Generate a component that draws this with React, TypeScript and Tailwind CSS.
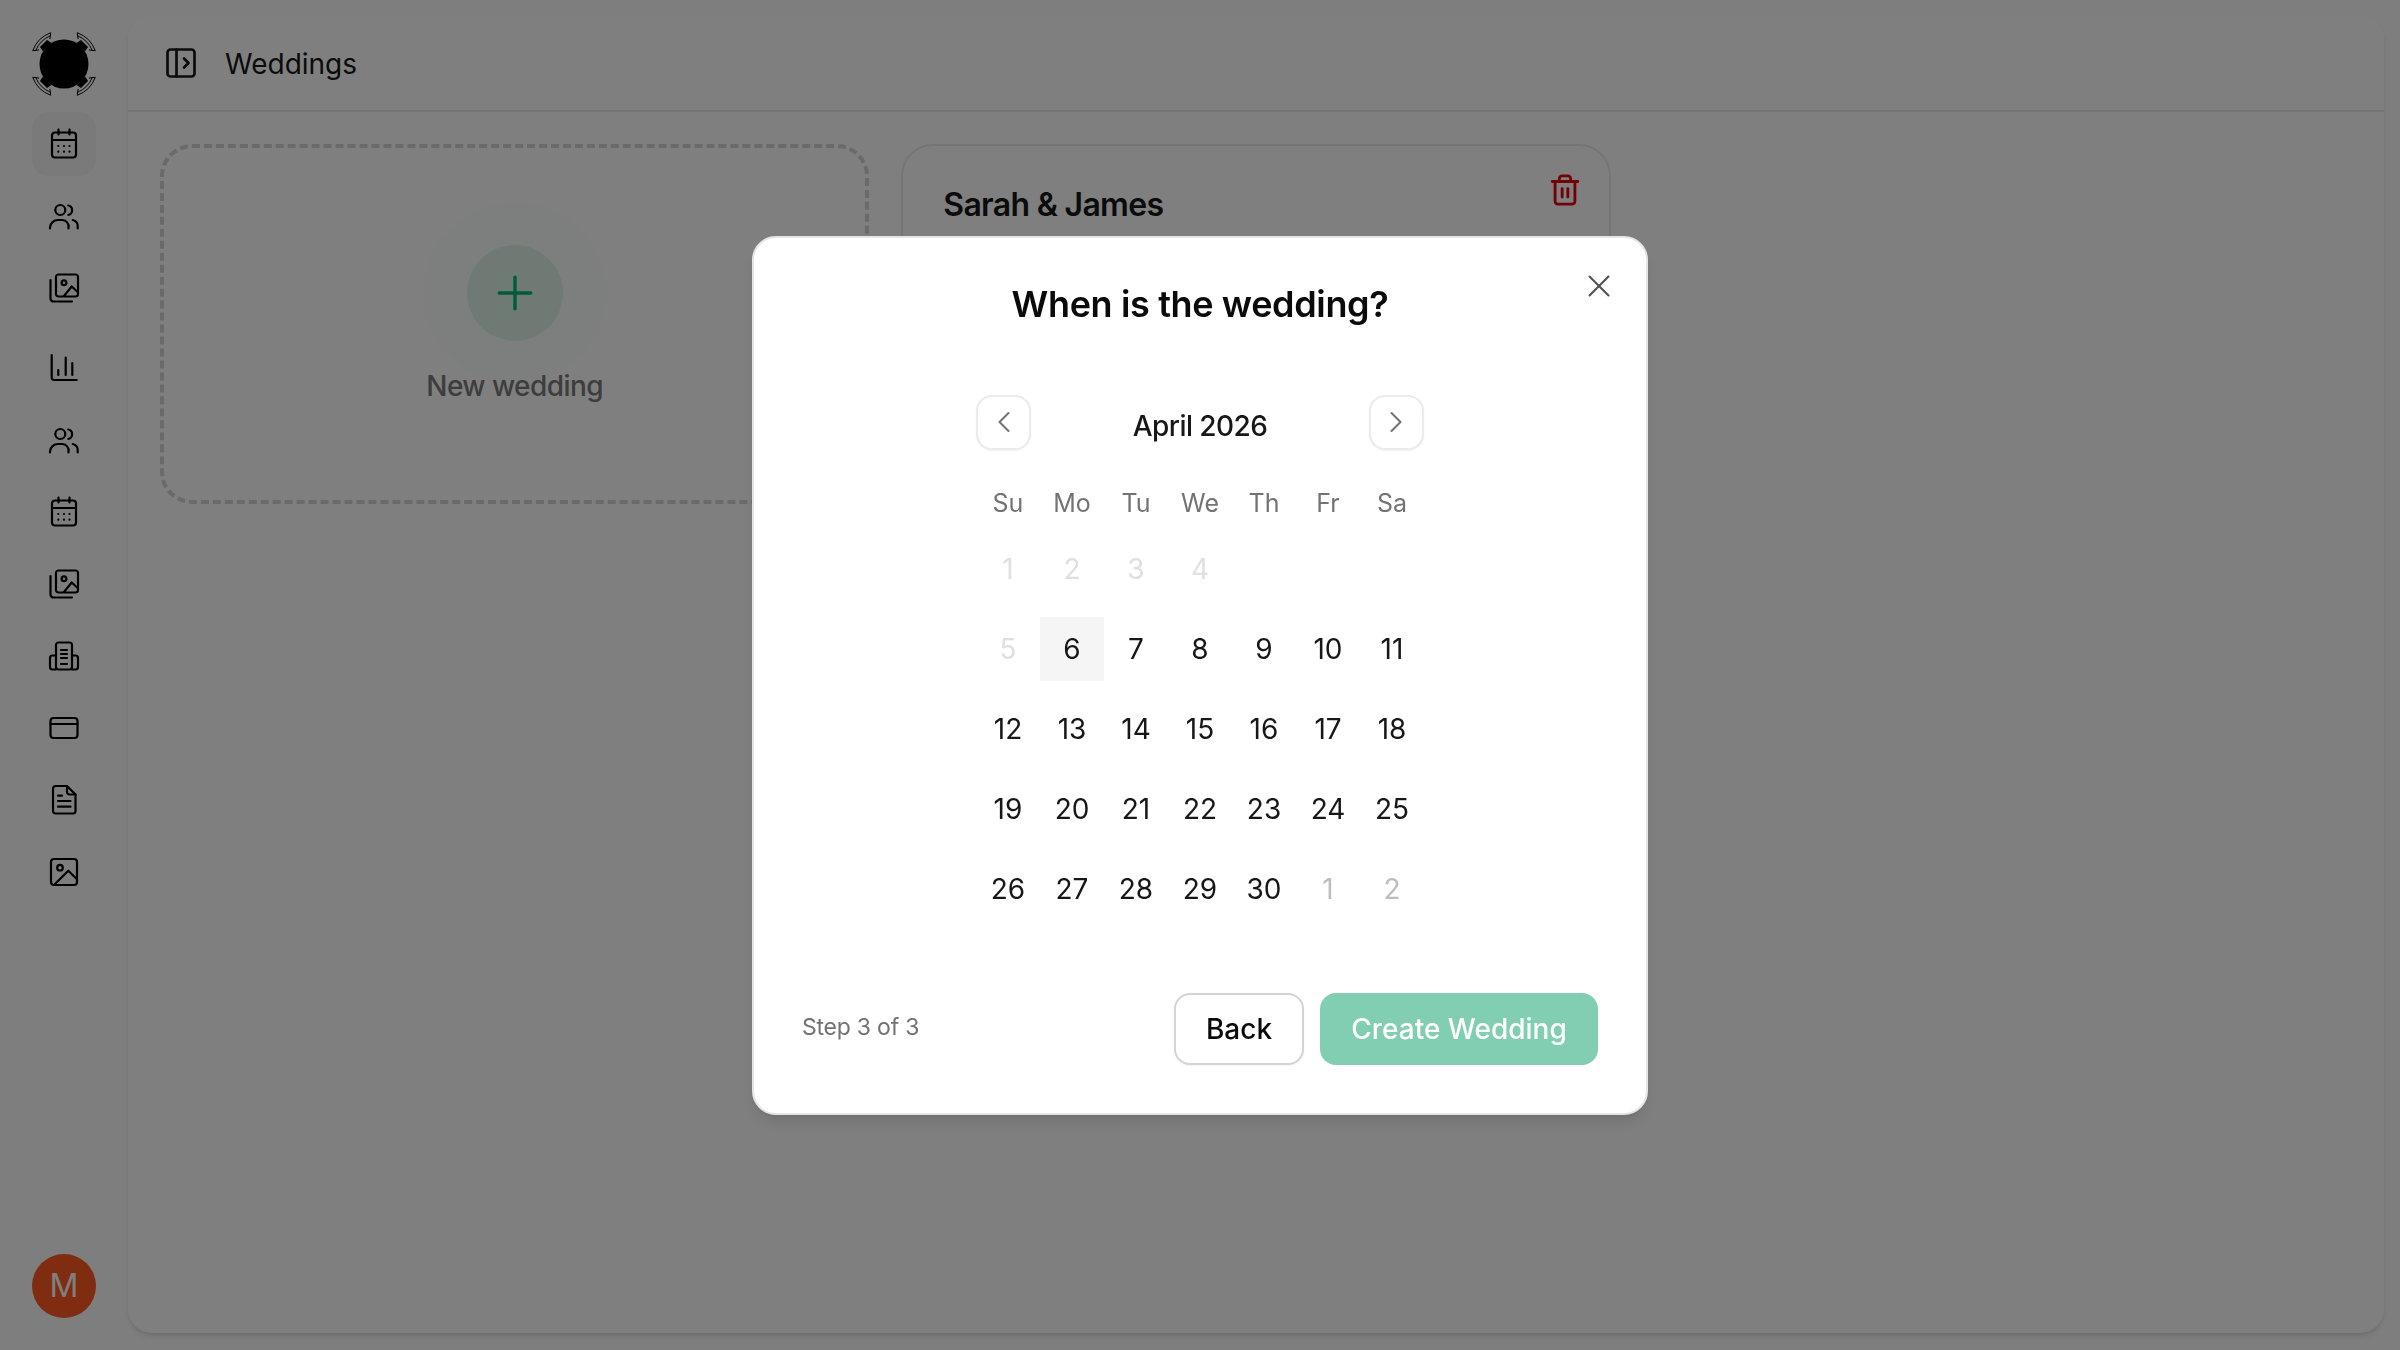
import { ChevronLeft, ChevronRight, PanelLeftOpen, Plus, Trash2, X } from "lucide-react";
import type { ReactNode } from "react";

const FONT = "font-['Inter','Liberation_Sans',sans-serif]";

function Icon({ children }: { children: ReactNode }) {
  return (
    <svg
      width="32"
      height="32"
      viewBox="0 0 32 32"
      fill="none"
      stroke="currentColor"
      strokeWidth="2.2"
      strokeLinecap="round"
      strokeLinejoin="round"
    >
      {children}
    </svg>
  );
}

const CalendarIcon = () => (
  <Icon>
    <rect x="4" y="4.5" width="24" height="25" rx="3" />
    <path d="M4 12h24M10.5 1.5v5M21.5 1.5v5" />
    <path d="M10.3 18h.01M16 18h.01M21.5 18h.01M10.3 23.7h.01M16 23.7h.01M21.5 23.7h.01" />
  </Icon>
);

const UsersIcon = () => (
  <Icon>
    <circle cx="12.3" cy="10" r="5" />
    <path d="M20.3 5.5a4.8 4.8 0 0 1 0 9.4" />
    <path d="M2 28.5v-1a8 8 0 0 1 8-7.5h4.5a6.5 6.5 0 0 1 6 7.5v1" />
    <path d="M24.7 20a6 6 0 0 1 5 7v1.5" />
  </Icon>
);

const ImagesIcon = () => (
  <Icon>
    <rect x="8" y="2.5" width="22" height="22" rx="2.5" />
    <circle cx="16" cy="10.7" r="2.4" />
    <path d="M16 24l7.7-9.5 6 5.5" />
    <path d="M2.5 8v18.5a3 3 0 0 0 3 3h18.5" />
  </Icon>
);

const ChartIcon = () => (
  <Icon>
    <path d="M3.7 3v22.5a2.5 2.5 0 0 0 2.5 2.5h22.5" />
    <path d="M10.3 18v5M17.7 5.7V23M24.3 11v12" />
  </Icon>
);

const BuildingIcon = () => (
  <Icon>
    <rect x="8" y="2.5" width="16" height="27" rx="2.5" />
    <path d="M8 15.5H4.5A2.5 2.5 0 0 0 2 18v9a2.5 2.5 0 0 0 2.5 2.5H8" />
    <path d="M24 15.5h3.5A2.5 2.5 0 0 1 30 18v9a2.5 2.5 0 0 1-2.5 2.5H24" />
    <path d="M13 10h6M13 14h6M13 18h6M13 24h6" />
  </Icon>
);

const CardIcon = () => (
  <Icon>
    <rect x="2.5" y="6" width="27" height="20" rx="3" />
    <path d="M2.5 12h27" />
  </Icon>
);

const FileIcon = () => (
  <Icon>
    <path d="M7.5 2h11.5l8.5 8.5V27a2.5 2.5 0 0 1-2.5 2.5H7.5A2.5 2.5 0 0 1 5 27V4.5A2.5 2.5 0 0 1 7.5 2z" />
    <path d="M19 2v6a2.5 2.5 0 0 0 2.5 2.5h6" />
    <path d="M10 11.7h4M10 17h12.5M10 22.7h12.5" />
  </Icon>
);

const ImageIcon = () => (
  <Icon>
    <rect x="3" y="3" width="26" height="26" rx="3" />
    <circle cx="12" cy="11.7" r="2.8" />
    <path d="M7 28l13.3-13.3L29 23.3" />
  </Icon>
);

function Logo() {
  return (
    <svg width="64" height="64" viewBox="0 0 64 64" className="overflow-visible">
      <circle cx="32" cy="32" r="24.5" fill="#000" />
      {[45, 135, 225, 315].map((deg) => (
        <g key={deg} transform={`rotate(${deg} 32 32)`}>
          <path d="M26 8h12l-1-5H27z" fill="#000" />
          <path d="M19.3 0.5Q32-5.5 44.7 0.5" fill="none" stroke="#000" strokeWidth="0.9" />
          <path d="M21.5 2.5Q32-2 42.5 2.5" fill="none" stroke="#000" strokeWidth="0.9" />
          <path d="M19.3 0.5l5 4M44.7 0.5l-5 4" fill="none" stroke="#000" strokeWidth="0.9" />
        </g>
      ))}
    </svg>
  );
}

const NAV_TOP = [CalendarIcon, UsersIcon, ImagesIcon];
const NAV_BOTTOM = [ChartIcon, UsersIcon, CalendarIcon, ImagesIcon, BuildingIcon, CardIcon, FileIcon, ImageIcon];

function Sidebar() {
  return (
    <aside className="flex w-[128px] shrink-0 flex-col items-center pt-8 pb-8">
      <Logo />
      <nav className="mt-4 flex flex-col gap-2">
        {NAV_TOP.map((NavIcon, i) => (
          <div
            key={i}
            className={`flex h-16 w-16 items-center justify-center rounded-2xl text-black ${i === 0 ? "bg-[#f5f5f5]" : ""}`}
          >
            <NavIcon />
          </div>
        ))}
      </nav>
      <nav className="mt-4 flex flex-col gap-2">
        {NAV_BOTTOM.map((NavIcon, i) => (
          <div key={i} className="flex h-16 w-16 items-center justify-center text-black">
            <NavIcon />
          </div>
        ))}
      </nav>
      <div className="mt-auto flex h-16 w-16 items-center justify-center rounded-full bg-[#fe5820] text-[32px] text-white">
        M
      </div>
    </aside>
  );
}

function WeddingCards() {
  return (
    <div className="grid grid-cols-3 gap-8 p-8">
      <div className="relative flex h-[360px] flex-col items-center rounded-[32px] border-[4px] border-dashed border-[#d4d4d4] pt-[54px]">
        <div className="flex h-[182px] w-[182px] items-center justify-center rounded-full bg-[#fbfffc]">
          <div className="flex h-24 w-24 items-center justify-center rounded-full bg-[#dff5ea] text-[#00b478]">
            <Plus size={54} strokeWidth={1.5} />
          </div>
        </div>
        <p className="-mt-[16px] text-[28px] leading-9 font-medium tracking-[-0.02em] text-[#7a7a7a]">New wedding</p>
      </div>
      <div className="flex h-[360px] items-start justify-between rounded-[32px] border-2 border-[#ebebeb] pt-[39px] pr-[27px] pl-[40px]">
        <h3 className="text-[32px] leading-10 font-semibold tracking-[-0.022em] text-[#171717]">Sarah &amp; James</h3>
        <Trash2 size={34} strokeWidth={2} className="-mt-[12px] text-[#e7000b]" />
      </div>
      <div />
    </div>
  );
}

const WEEKDAYS = ["Su", "Mo", "Tu", "We", "Th", "Fr", "Sa"];
const FADED = "text-[#e0e0e0]";
const OUTSIDE = "text-[#bdbdbd]";
const DAYS: { label: string; tone?: string; selected?: boolean }[] = [
  { label: "1", tone: FADED },
  { label: "2", tone: FADED },
  { label: "3", tone: FADED },
  { label: "4", tone: FADED },
  { label: "" },
  { label: "" },
  { label: "" },
  { label: "5", tone: FADED },
  { label: "6", selected: true },
  ...Array.from({ length: 24 }, (_, i) => ({ label: String(i + 7) })),
  { label: "1", tone: OUTSIDE },
  { label: "2", tone: OUTSIDE },
];

function Calendar() {
  return (
    <div className="mx-auto w-[448px]">
      <div className="flex items-center justify-between">
        <button className="flex h-[55px] w-[55px] items-center justify-center rounded-2xl border-2 border-[#ebebeb] bg-white text-[#737373] shadow-xs">
          <ChevronLeft size={36} strokeWidth={1.4} />
        </button>
        <span className="pt-[7px] text-[28px] leading-9 font-medium tracking-[-0.02em] text-[#171717]">April 2026</span>
        <button className="flex h-[55px] w-[55px] items-center justify-center rounded-2xl border-2 border-[#ebebeb] bg-white text-[#737373] shadow-xs">
          <ChevronRight size={36} strokeWidth={1.4} />
        </button>
      </div>
      <div className="mt-[37px] grid grid-cols-7 text-center text-[25px] leading-8 text-[#737373]">
        {WEEKDAYS.map((d) => (
          <span key={d}>{d}</span>
        ))}
      </div>
      <div className="mt-[18px] grid grid-cols-7 gap-y-4">
        {DAYS.map((day, i) => (
          <div
            key={i}
            className={`flex h-16 items-center justify-center text-[28px] ${day.tone ?? "text-[#171717]"} ${day.selected ? "bg-[#f5f5f5]" : ""}`}
          >
            {day.label}
          </div>
        ))}
      </div>
    </div>
  );
}

function Dialog() {
  return (
    <div className="fixed inset-0 flex items-center justify-center bg-black/50">
      <div className="relative w-[896px] rounded-3xl border-2 border-[#e5e5e5] bg-white p-12 shadow-lg">
        <button className="absolute top-[29px] right-[28px] text-[#525252]">
          <X size={38} strokeWidth={1.3} />
        </button>
        <h2 className="-mt-[2px] text-center text-[36px] leading-10 font-semibold tracking-[-0.01em] text-[#0a0a0a]">
          When is the wedding?
        </h2>
        <div className="mt-[71px]">
          <Calendar />
        </div>
        <div className="mt-[72px] flex items-center justify-between">
          <span className="-mt-[2px] text-[23px] tracking-[-0.01em] text-[#737373]">Step 3 of 3</span>
          <div className="flex gap-4">
            <button className="h-[72px] w-[130px] rounded-2xl border-2 border-[#d4d4d4] bg-white text-[28px] font-medium text-[#0a0a0a] shadow-xs">
              Back
            </button>
            <button className="h-[72px] w-[278px] rounded-2xl bg-[#82ceb2] text-[28px] font-medium text-white">
              Create Wedding
            </button>
          </div>
        </div>
      </div>
    </div>
  );
}

export default function App() {
  return (
    <div className={`flex h-[1350px] w-[2400px] overflow-hidden bg-[#fdfdfd] ${FONT}`}>
      <Sidebar />
      <main className="mt-4 mr-4 mb-[17px] flex-1 rounded-3xl bg-white shadow-md">
        <header className="flex h-[96px] items-center gap-[26px] border-b-2 border-[#ebebeb] pl-[35px]">
          <PanelLeftOpen size={36} strokeWidth={1.8} className="text-[#171717]" />
          <h1 className="pt-[2px] text-[28px] text-[#171717]">Weddings</h1>
        </header>
        <WeddingCards />
      </main>
      <Dialog />
    </div>
  );
}
